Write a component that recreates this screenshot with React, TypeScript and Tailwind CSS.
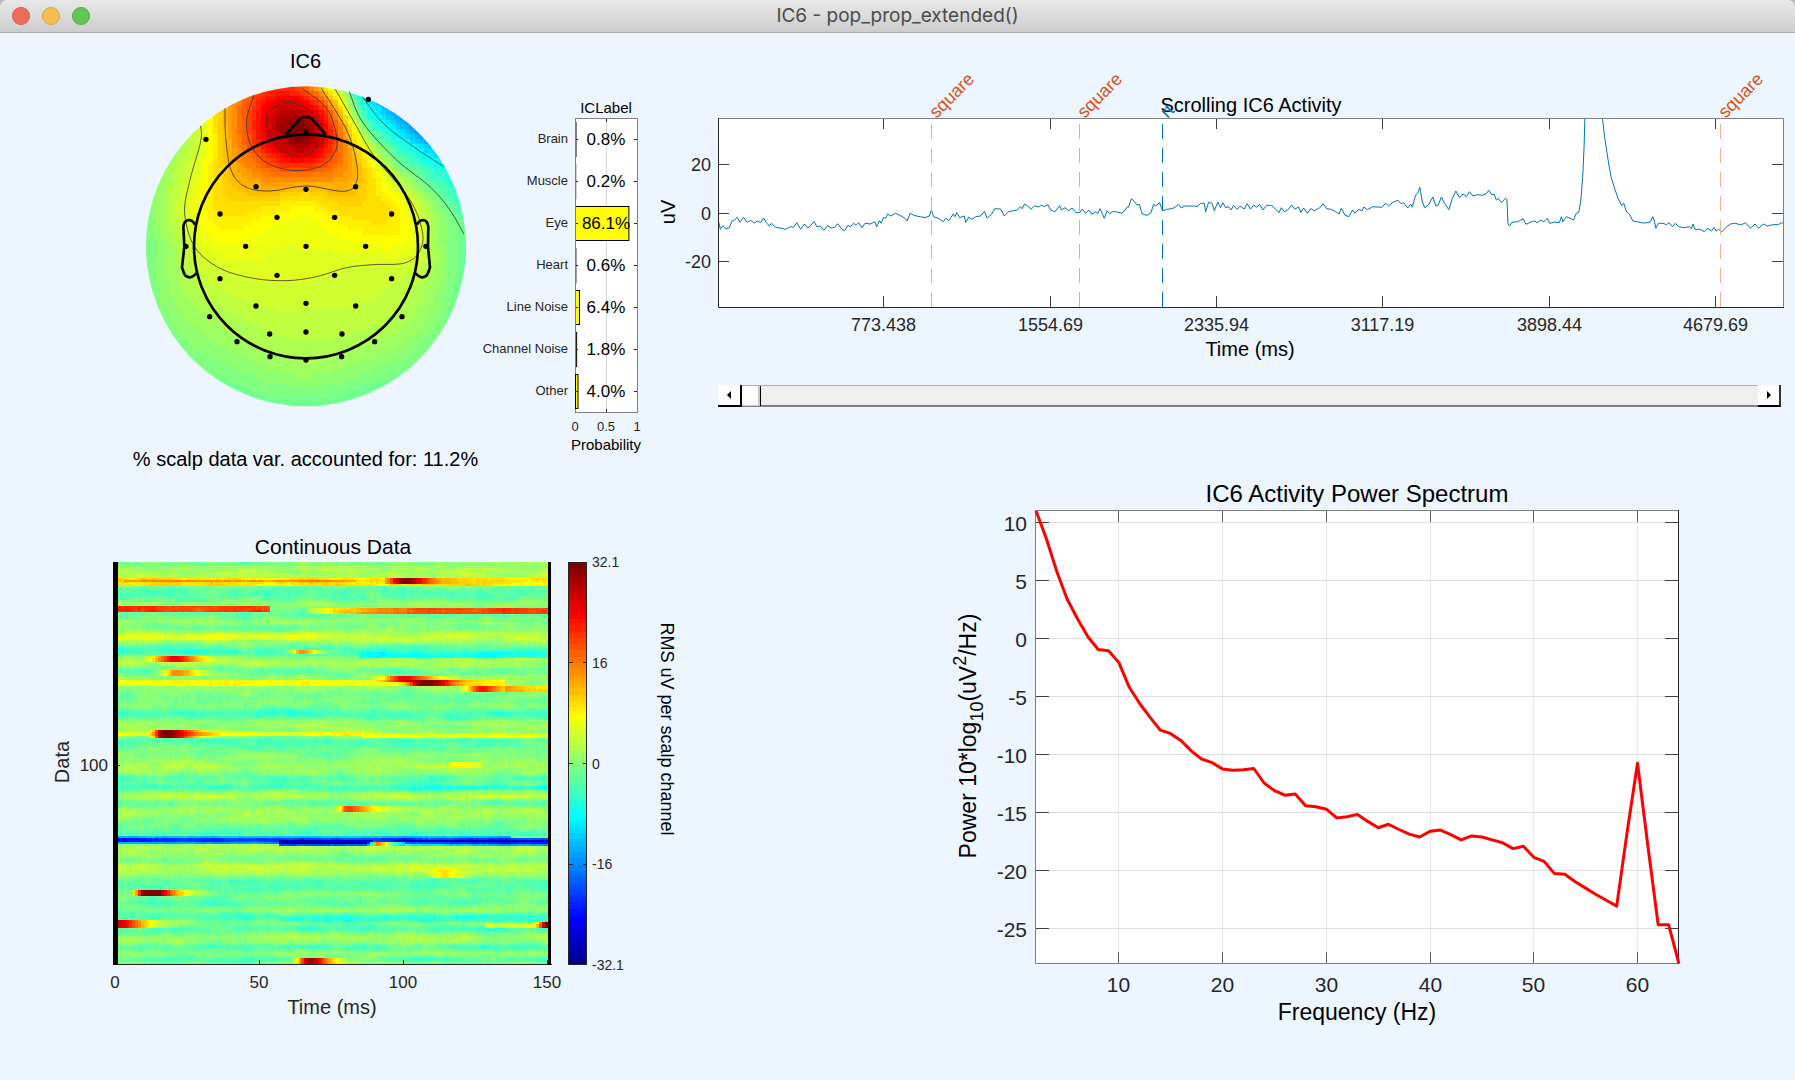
import { useMemo, useState } from 'react';

type Point = [number, number];

const AXIS = '#262626';

/* ---------- colour map ---------- */

const LEVELS = 64;

const clamp = (v: number, lo: number, hi: number) => Math.min(hi, Math.max(lo, v));

// value in -1..1 -> index in the 64 step jet map
const levelOf = (v: number) => clamp(Math.floor(((v + 1) / 2) * LEVELS), 0, LEVELS - 1);

const jet = (level: number) => {
  const t = (level + 1) / LEVELS;
  const ramp = (c: number) => Math.round(255 * clamp(1.5 - Math.abs(4 * t - c), 0, 1));
  return `rgb(${ramp(3)},${ramp(2)},${ramp(1)})`;
};

interface Layer {
  color: string;
  d: string;
}

// merges equal neighbours in each row and collects one path per colour
function rasterize(
  cols: number,
  rows: number,
  x0: number,
  y0: number,
  w: number,
  h: number,
  value: (x: number, y: number, col: number, row: number) => number,
): Layer[] {
  const paths: string[] = Array(LEVELS).fill('');
  for (let r = 0; r < rows; r++) {
    let start = 0;
    let current = -1;
    for (let c = 0; c <= cols; c++) {
      const level = c < cols ? levelOf(value(x0 + (c + 0.5) * w, y0 + (r + 0.5) * h, c, r)) : -1;
      if (level === current) continue;
      if (current >= 0) {
        const len = ((c - start) * w).toFixed(2);
        paths[current] += `M${(x0 + start * w).toFixed(2)} ${(y0 + r * h).toFixed(2)}h${len}v${h}h-${len}z`;
      }
      current = level;
      start = c;
    }
  }
  return paths.map((d, i) => ({ color: jet(i), d })).filter((l) => l.d);
}

function Raster({ layers }: { layers: Layer[] }) {
  return (
    <g shapeRendering="crispEdges">
      {layers.map((l) => (
        <path key={l.color} d={l.d} fill={l.color} />
      ))}
    </g>
  );
}

/* ---------- scalp map ---------- */

const contours: { level: number; closed?: boolean; points: Point[] }[] = [
  {
    level: 0.79,
    closed: true,
    points: [[410, 165], [425, 120], [478, 97], [535, 120], [575, 170], [575, 215], [545, 248], [500, 257], [445, 235]],
  },
  {
    level: 0.58,
    points: [[372, 76], [350, 150], [360, 220], [405, 275], [485, 301], [570, 290], [613, 250], [620, 200], [590, 115], [515, 55]],
  },
  {
    level: 0.37,
    points: [[285, 115], [287, 200], [303, 300], [345, 350], [420, 363], [528, 348], [640, 364], [678, 340], [680, 280], [650, 180], [574, 55]],
  },
  {
    level: 0.16,
    points: [
      [212, 168], [212, 215], [180, 330], [164, 430], [195, 532], [270, 595], [370, 625], [470, 632], [560, 620],
      [650, 593], [730, 584], [820, 580], [865, 550], [878, 490], [840, 390], [735, 262], [680, 170], [616, 58],
    ],
  },
  { level: -0.05, points: [[658, 65], [700, 160], [800, 270], [900, 350], [960, 420], [1002, 493]] },
  { level: -0.26, points: [[697, 80], [760, 160], [850, 230], [942, 290]] },
];

const fieldSamples: [number, number, number][] = [
  [490, 172, 0.96], [528, 188, 0.98], [440, 50, 0.62], [800, 140, -0.42], [870, 200, -0.43], [740, 105, -0.34],
  [60, 450, 0], [100, 610, 0.02], [50, 528, -0.03], [528, 1005, -0.05], [200, 870, -0.02], [860, 870, -0.03],
  [1000, 560, -0.06], [950, 700, -0.01], [528, 528, 0.19], [528, 440, 0.22], [400, 430, 0.26], [270, 400, 0.3],
  [780, 420, 0.28], [528, 700, 0.13], [528, 800, 0.1], [300, 700, 0.11], [750, 700, 0.12], [240, 290, 0.25],
  [250, 125, 0.26], [130, 300, 0.08], [850, 640, 0.1], [130, 540, 0.06], [930, 500, 0.03], [528, 900, 0.05],
  [740, 320, 0.26], [720, 355, 0.3], [310, 370, 0.33], [80, 350, 0.02], [330, 960, -0.04], [720, 960, -0.05],
];

const sensors: Point[] = [
  [715, 88], [228, 208], [528, 188], [378, 350], [528, 358], [677, 350], [270, 432], [441, 442], [614, 442],
  [785, 432], [168, 529], [347, 529], [528, 529], [707, 529], [888, 529], [270, 626], [441, 616], [614, 616],
  [785, 626], [378, 708], [528, 700], [677, 708], [239, 740], [816, 740], [321, 815], [419, 792], [528, 786],
  [636, 792], [734, 815], [420, 860], [635, 860], [528, 870],
];

const green = (ax: number, ay: number, bx: number, by: number) => {
  const r2 = ((ax - bx) ** 2 + (ay - by) ** 2) / 90000;
  return r2 < 1e-9 ? 0 : r2 * (Math.log(r2) / 2 - 1);
};

// biharmonic spline through the scattered samples
function splineField(samples: [number, number, number][]) {
  const n = samples.length;
  const m = samples.map(([x, y, v]) => [...samples.map(([sx, sy]) => green(x, y, sx, sy)), v]);
  for (let i = 0; i < n; i++) {
    let p = i;
    for (let r = i + 1; r < n; r++) if (Math.abs(m[r][i]) > Math.abs(m[p][i])) p = r;
    [m[i], m[p]] = [m[p], m[i]];
    for (let r = i + 1; r < n; r++) {
      const f = m[r][i] / m[i][i];
      for (let c = i; c <= n; c++) m[r][c] -= f * m[i][c];
    }
  }
  const w = Array(n).fill(0);
  for (let i = n - 1; i >= 0; i--) {
    let s = m[i][n];
    for (let c = i + 1; c < n; c++) s -= m[i][c] * w[c];
    w[i] = s / m[i][i];
  }
  return (x: number, y: number) => samples.reduce((s, [sx, sy], i) => s + w[i] * green(x, y, sx, sy), 0);
}

function smoothPath(pts: Point[], closed = false) {
  const n = pts.length;
  const at = (i: number) => (closed ? pts[(i + n) % n] : pts[clamp(i, 0, n - 1)]);
  let d = `M${pts[0][0]} ${pts[0][1]}`;
  for (let i = 0; i < (closed ? n : n - 1); i++) {
    const [a, b, c, e] = [at(i - 1), at(i), at(i + 1), at(i + 2)];
    d += `C${b[0] + (c[0] - a[0]) / 6} ${b[1] + (c[1] - a[1]) / 6} ${c[0] - (e[0] - b[0]) / 6} ${c[1] - (e[1] - b[1]) / 6} ${c[0]} ${c[1]}`;
  }
  return d;
}

function ScalpMap() {
  const layers = useMemo(() => {
    const onContours = contours.flatMap((c) =>
      c.points.map(([x, y]): [number, number, number] => [x, y, c.level]),
    );
    const field = splineField([...onContours, ...fieldSamples]);
    return rasterize(67, 67, 48, 48, 14.4, 14.4, field);
  }, []);

  return (
    <svg viewBox="0 0 347 340" className="block w-full" role="img" aria-label="Scalp map of IC6">
      <defs>
        <clipPath id="scalp">
          <circle cx="528" cy="529" r="480" />
        </clipPath>
      </defs>
      <g transform="translate(-2 -5) scale(0.3333)">
        <g clipPath="url(#scalp)">
          <Raster layers={layers} />
        </g>
        <g fill="none" stroke="#333" strokeWidth="2.4">
          {contours.map((c) => (
            <path key={c.level} d={smoothPath(c.points, c.closed)} />
          ))}
        </g>
        <g fill="none" stroke="#000" strokeWidth="8" strokeLinejoin="round">
          <circle cx="528" cy="529" r="336" />
          <path d="M468 194L511 146Q518 141 528 141Q538 141 545 146L588 194" />
          <path d="M195 464Q188 450 176 450Q162 452 160 470L163 530L156 592Q160 608 167 618Q180 626 190 618L200 610" />
          <path d="M861 464Q868 450 880 450Q893 452 895 470L894 530L900 592Q896 608 889 618Q876 626 866 618L856 610" />
        </g>
        {sensors.map(([x, y]) => (
          <circle key={`${x}-${y}`} cx={x} cy={y} r="8" />
        ))}
      </g>
    </svg>
  );
}

/* ---------- ICLabel ---------- */

const classes = [
  { name: 'Brain', p: 0.8 },
  { name: 'Muscle', p: 0.2 },
  { name: 'Eye', p: 86.1 },
  { name: 'Heart', p: 0.6 },
  { name: 'Line Noise', p: 6.4 },
  { name: 'Channel Noise', p: 1.8 },
  { name: 'Other', p: 4.0 },
];

function ClassBars() {
  return (
    <svg viewBox="0 0 215 340" className="block w-full" role="img" aria-label="ICLabel probabilities">
      <rect x="96" y="1" width="62" height="293" fill="#fff" />
      <path d="M127.5 1V294" stroke="#d9d9d9" />
      {classes.map((c, i) => {
        const y = 21 + i * 42;
        return (
          <g key={c.name}>
            <path d="M96.5 0.5V294" stroke="#808080" />
            <rect
              x="96.5"
              y={y - 16.5}
              width={Math.max(0.2, c.p * 0.62)}
              height="34"
              fill="#ff0"
              stroke="#000"
            />
            <path d={`M96 ${y + 0.5}h3M158 ${y + 0.5}h-3`} stroke={AXIS} />
            <text x="89" y={y + 4} textAnchor="end" fontSize="13" fill={AXIS}>
              {c.name}
            </text>
            <text x="127" y={y + 6} textAnchor="middle" fontSize="17">
              {c.p.toFixed(1)}%
            </text>
          </g>
        );
      })}
      <path d="M96 0.5H158.5V294.5H96" fill="none" stroke="#808080" />
      <path d="M127.5 1v3M127.5 294v-3" stroke={AXIS} />
      <g fontSize="13" fill={AXIS} textAnchor="middle">
        <text x="96" y="313">0</text>
        <text x="127" y="313">0.5</text>
        <text x="158" y="313">1</text>
      </g>
      <text x="127" y="332" textAnchor="middle" fontSize="15">
        Probability
      </text>
    </svg>
  );
}

/* ---------- scrolling activity ---------- */

// prettier-ignore
const traceA = [
  80,485, 85,508, 92,497, 100,507, 110,503, 118,482, 125,480, 132,472, 140,487, 150,472, 160,487, 170,481, 180,489,
  190,483, 198,488, 206,474, 214,488, 222,498, 228,490, 240,502, 255,505, 268,508, 280,500, 290,502, 299,488, 310,508,
  320,492, 330,504, 348,485, 355,500, 365,498, 375,511, 385,497, 395,504, 405,502, 414,491, 425,508, 433,512, 442,496,
  448,500, 458,490, 465,496, 472,488, 482,503, 490,490, 505,492, 517,485, 523,500, 530,482, 535,490, 542,472, 548,475,
  553,462, 562,468, 575,460, 590,467, 602,475, 608,483, 616,460, 630,467, 645,470, 658,473, 670,468, 676,450, 682,470,
  695,475, 709,485, 716,475, 725,482, 737,462, 742,470, 747,458, 755,473, 768,468, 772,487, 780,472, 790,478, 800,470,
  813,468, 824,454, 832,474, 845,462, 853,446, 870,447, 880,468, 892,455, 905,452, 917,450, 925,440, 930,446, 937,432,
  948,440, 955,448, 965,437, 975,441, 985,436, 993,440, 1002,434, 1010,450, 1022,455, 1035,437, 1040,450, 1050,443,
  1060,452, 1070,444, 1080,457, 1092,458, 1098,447, 1108,460, 1117,450, 1125,463, 1135,455, 1142,460, 1148,446,
  1155,462, 1160,475, 1168,452, 1175,461, 1185,454, 1195,456, 1210,460, 1218,450, 1225,440, 1228,442, 1236,416,
  1245,425, 1252,435, 1258,433, 1266,462, 1280,466, 1290,460, 1298,433, 1304,438, 1315,428, 1323,452, 1335,448,
  1350,446, 1360,440, 1368,433, 1375,444, 1385,438, 1395,438, 1410,438, 1420,440, 1430,430, 1440,430, 1444,455,
  1452,427, 1462,430, 1468,452, 1478,426, 1485,443, 1492,428, 1500,443, 1508,440, 1515,450, 1522,436, 1532,448,
  1538,440,
];

// prettier-ignore
const traceB = [
  0,438, 12,447, 20,431, 30,447, 38,436, 48,442, 55,433, 65,450, 75,436, 88,436, 100,447, 110,458, 117,443, 125,455,
  135,450, 146,435, 155,448, 165,441, 172,457, 180,444, 190,460, 200,446, 210,452, 225,444, 235,431, 245,446, 258,448,
  270,455, 280,462, 286,445, 296,465, 308,470, 318,450, 325,460, 335,448, 345,452, 350,441, 360,449, 375,440, 400,442,
  412,430, 420,438, 432,427, 446,421, 455,431, 462,428, 474,444, 482,432, 487,441, 496,405, 502,400, 508,382, 515,425,
  522,443, 532,435, 545,411, 553,438, 560,435, 569,411, 578,430, 590,449, 600,415, 610,393, 620,413, 630,402, 640,410,
  648,395, 658,408, 670,404, 685,406, 695,402, 703,391, 712,405, 718,402, 724,420, 730,415, 739,428, 750,415, 754,418,
  757,492, 761,498, 768,487, 785,485, 800,476, 808,493, 820,487, 832,483, 840,488, 850,480, 858,486, 868,475, 875,490,
  890,486, 902,488, 908,470, 912,485, 922,470, 932,475, 942,480, 950,460, 957,457, 963,420, 968,350, 972,260, 974,176,
];

// prettier-ignore
const traceC = [
  1024,176, 1030,230, 1040,300, 1048,350, 1060,390, 1068,415, 1078,437, 1084,430, 1092,455, 1100,462, 1110,483,
  1125,486, 1140,489, 1152,488, 1160,485, 1166,470, 1170,480, 1175,505, 1182,490, 1195,490, 1205,494, 1212,488,
  1222,500, 1230,490, 1240,500, 1255,503, 1270,500, 1275,506, 1280,492, 1285,508, 1300,508, 1312,515, 1322,505,
  1332,513, 1340,502, 1345,513, 1352,508, 1362,515, 1372,503, 1385,492, 1400,490, 1415,495, 1428,488, 1442,505,
  1455,492, 1465,505, 1478,492, 1490,498, 1505,494, 1520,494, 1530,488, 1534,490,
];

const toPoints = (flat: number[], offset: number, scale: number) => {
  const out: string[] = [];
  for (let i = 0; i < flat.length; i += 2) {
    out.push(`${(offset + flat[i] / scale).toFixed(1)},${(flat[i + 1] / 3 - 58).toFixed(1)}`);
  }
  return out.join(' ');
};

const activityPoints = `${toPoints(traceA, -4, 2.8)} ${toPoints(traceB, 546, 2.825)}`;
const activityTail = toPoints(traceC, 546, 2.825);

const timeTicks = [
  { x: 189.5, label: '773.438' },
  { x: 356.5, label: '1554.69' },
  { x: 522.5, label: '2335.94' },
  { x: 688.5, label: '3117.19' },
  { x: 855.5, label: '3898.44' },
  { x: 1021.5, label: '4679.69' },
];

const voltTicks = [
  { y: 46.5, label: '20' },
  { y: 95.5, label: '0' },
  { y: 143.5, label: '-20' },
];

const events = [
  { x: 237.5, label: 'square', text: '#d95319', line: '#eda58c' },
  { x: 385.5, label: 'square', text: '#d95319', line: '#eda58c' },
  { x: 468.5, label: 'rt', text: '#0072bd', line: '#0072bd' },
  { x: 1026.5, label: 'square', text: '#d95319', line: '#f4ae90' },
];

function ActivityPlot() {
  return (
    <svg viewBox="0 0 1101 255" className="block w-full overflow-visible" role="img" aria-label="IC6 activity over time">
      <rect x="24" y="1" width="1065" height="188" fill="#fff" />
      {timeTicks.map((t) => (
        <g key={t.label}>
          <path d={`M${t.x} 1v10M${t.x} 189v-11`} stroke="#404040" />
          <text x={t.x} y="213" textAnchor="middle" fontSize="18" fill={AXIS}>
            {t.label}
          </text>
        </g>
      ))}
      {voltTicks.map((t) => (
        <g key={t.label}>
          <path d={`M24 ${t.y}h11M1089 ${t.y}h-11`} stroke="#404040" />
          <text x="17" y={t.y + 6} textAnchor="end" fontSize="18" fill={AXIS}>
            {t.label}
          </text>
        </g>
      ))}
      <g fill="none" stroke="#0072bd" strokeWidth="1">
        <polyline points={activityPoints} />
        <polyline points={activityTail} />
      </g>
      {events.map((e) => (
        <g key={e.x}>
          <path d={`M${e.x} 189V1`} stroke={e.line} strokeDasharray="15 9" />
          <text transform={`translate(${e.x + 5} 1) rotate(-45)`} fontSize="18" fill={e.text}>
            {e.label}
          </text>
        </g>
      ))}
      <path d="M24 0.5H1089.5V189" fill="none" stroke="#808080" />
      <path d="M24.5 0V189.5H1090" fill="none" stroke={AXIS} />
      <text x="556" y="238" textAnchor="middle" fontSize="20">
        Time (ms)
      </text>
      <text transform="translate(-19 94) rotate(-90)" textAnchor="middle" fontSize="20">
        uV
      </text>
    </svg>
  );
}

const arrowCls =
  'flex h-[22px] shrink-0 items-center justify-center border-r-2 border-b-2 border-b-black bg-white';

function TimeScroller() {
  const [pos, setPos] = useState(0);
  return (
    <div className="mt-3 mr-[14px] ml-6 flex h-[22px]">
      <button
        type="button"
        aria-label="Scroll back"
        onClick={() => setPos(Math.max(0, pos - 1))}
        className={arrowCls + ' w-6 border-r-black'}
      >
        <svg viewBox="0 0 4 8" className="h-2 w-1">
          <path d="M0 4L4 0V8Z" />
        </svg>
      </button>
      <input
        type="range"
        aria-label="Time window"
        min={0}
        max={100}
        value={pos}
        onChange={(e) => setPos(Number(e.target.value))}
        className="h-[22px] min-w-0 flex-1 appearance-none border-t border-b-2 border-t-[#b0b0b0] border-b-[#808080] bg-[#efefef] [&::-webkit-slider-thumb]:h-[20px] [&::-webkit-slider-thumb]:w-[19px] [&::-webkit-slider-thumb]:appearance-none [&::-webkit-slider-thumb]:border-r [&::-webkit-slider-thumb]:border-r-black [&::-webkit-slider-thumb]:bg-white [&::-webkit-slider-thumb]:shadow-[inset_-2px_-1px_0_#c8c8c8]"
      />
      <button
        type="button"
        aria-label="Scroll forward"
        onClick={() => setPos(Math.min(100, pos + 1))}
        className={arrowCls + ' w-[23px] border-r-[#333]'}
      >
        <svg viewBox="0 0 4 8" className="h-2 w-1">
          <path d="M4 4L0 0V8Z" />
        </svg>
      </button>
    </div>
  );
}

/* ---------- continuous data image ---------- */

// background level at given heights, interpolated in between
const baseline: Point[] = [
  [126, 0], [150, 0.1], [170, 0.12], [196, 0], [215, -0.1], [240, -0.05], [250, 0.06], [285, -0.08], [305, 0.03],
  [325, -0.04], [345, 0.16], [360, 0.14], [380, -0.05], [398, -0.16], [410, 0], [430, 0.12], [445, 0], [455, -0.06],
  [475, 0.02], [500, 0.06], [520, 0], [540, -0.03], [560, 0.02], [578, -0.14], [592, -0.12], [605, 0.03], [625, 0.04],
  [645, 0.08], [662, -0.1], [700, -0.01], [738, 0.08], [760, 0.04], [775, -0.1], [790, -0.05], [803, -0.16],
  [815, 0], [830, 0.14], [850, -0.06], [870, 0.06], [900, 0.04], [925, -0.06], [944, -0.1], [985, 0.12],
  [1010, 0.02], [1020, -0.04], [1040, 0.16], [1060, 0.1], [1080, -0.08], [1105, -0.12], [1120, 0], [1150, -0.08],
  [1170, 0.06], [1190, -0.14], [1212, -0.02], [1230, -0.12], [1250, 0.08], [1270, 0.02], [1282, -0.12], [1302, 0.06],
  [1320, -0.1], [1335, 0.03],
];

// y0, y1, x0, x1, value at x0, value at x1
const strips: [number, number, number, number, number, number][] = [
  [174, 195, 234, 1530, 0.3, 0.27],
  [178, 186, 249, 948, 0.45, 0.42],
  [259, 274, 234, 690, 0.62, 0.61],
  [266, 281, 800, 950, 0.1, 0.34],
  [266, 281, 950, 1100, 0.38, 0.54],
  [266, 281, 1100, 1530, 0.57, 0.62],
  [345, 357, 234, 830, 0.18, 0.18],
  [397, 412, 955, 1530, -0.24, -0.2],
  [481, 496, 234, 1395, 0.23, 0.19],
  [498, 514, 1395, 1530, 0.3, 0.26],
  [636, 650, 234, 965, 0.19, 0.24],
  [644, 656, 965, 1530, 0.19, 0.19],
  [728, 742, 1232, 1322, 0.22, 0.16],
  [800, 810, 1080, 1530, -0.14, -0.24],
  [949, 953, 234, 1412, -0.4, -0.4],
  [954, 965, 234, 1530, -0.7, -0.64],
  [967, 971, 234, 714, -0.4, -0.5],
  [961, 971, 714, 1000, -0.94, -0.9],
  [973, 976, 714, 1000, -0.6, -0.6],
  [967, 976, 1000, 1090, -0.15, -0.4],
  [961, 965, 1060, 1530, -0.88, -0.92],
  [967, 971, 1090, 1530, -0.6, -0.75],
  [973, 976, 1090, 1530, -0.3, -0.5],
  [1191, 1207, 724, 1530, -0.18, -0.18],
  [1210, 1225, 1335, 1530, 0.13, 0.13],
];

// y0, y1, start, centre, end, peak
const pulses: [number, number, number, number, number, number][] = [
  [177, 192, 1030, 1095, 1210, 1],
  [388, 403, 735, 785, 880, 0.46],
  [406, 424, 310, 408, 520, 0.76],
  [450, 467, 350, 408, 540, 0.46],
  [468, 486, 1000, 1095, 1250, 0.76],
  [480, 498, 1080, 1160, 1290, 1.05],
  [498, 516, 1260, 1328, 1440, 0.7],
  [633, 651, 330, 375, 510, 1.1],
  [861, 878, 885, 925, 1050, 0.62],
  [966, 975, 985, 1012, 1070, 0.5],
  [1053, 1075, 1150, 1215, 1290, 0.3],
  [1110, 1128, 276, 325, 440, 1.35],
  [1203, 1221, 150, 234, 370, 0.85],
  [1209, 1226, 1485, 1525, 1560, 1.05],
  [1314, 1332, 755, 812, 920, 0.92],
];

const hash = (x: number, y: number) => {
  let h = Math.imul(x | 0, 374761393) ^ Math.imul(y | 0, 668265263);
  h = Math.imul(h ^ (h >>> 13), 1274126177);
  return ((h ^ (h >>> 16)) >>> 0) / 4294967295 - 0.5;
};

const noise = (x: number, y: number) => {
  const [ix, iy] = [Math.floor(x), Math.floor(y)];
  const [dx, dy] = [x - ix, y - iy];
  const top = hash(ix, iy) * (1 - dx) + hash(ix + 1, iy) * dx;
  const bottom = hash(ix, iy + 1) * (1 - dx) + hash(ix + 1, iy + 1) * dx;
  return top * (1 - dy) + bottom * dy;
};

function baselineAt(y: number) {
  const i = clamp(baseline.findIndex((b) => b[0] > y), 1, baseline.length - 1);
  const [a, b] = [baseline[i - 1], baseline[i]];
  return a[1] + ((b[1] - a[1]) * (y - a[0])) / (b[0] - a[0]);
}

function dataValue(x: number, y: number, col: number, row: number) {
  let v = baselineAt(y) * 0.85 - 0.02;
  for (const [y0, y1, x0, x1, v0, v1] of strips) {
    if (y >= y0 && y <= y1 && x > x0 && x < x1) v = v0 + ((v1 - v0) * (x - x0)) / (x1 - x0);
  }
  v += 0.11 * noise(col / 11, row / 3) + 0.08 * noise(col / 4 + 90, row / 1.6) + 0.05 * noise(col + 300, row / 3);
  for (const [y0, y1, start, centre, end, peak] of pulses) {
    if (y < y0 || y > y1 || x < start || x > end + 160) continue;
    const left = x < centre;
    const s = left ? (centre - start) / 1.5 : (end - centre) / 1.5;
    v += (peak - Math.min(v, peak)) * Math.exp(-((Math.abs(x - centre) / s) ** (left ? 2 : 1.5)));
  }
  return v;
}

function DataImage() {
  const layers = useMemo(() => rasterize(150, 201, 234, 126, 8.6, 6, dataValue), []);

  return (
    <svg viewBox="0 0 694 480" className="block w-full overflow-visible" role="img" aria-label="Continuous data image">
      <g transform="translate(40 -41) scale(0.3333)">
        <Raster layers={layers} />
      </g>
      <path d="M116 403.5H552" stroke={AXIS} />
      <path d="M259.5 403v-4M403.5 403v-4M547.5 403v-4M116 204.5h4" stroke={AXIS} />
      <rect x="113" y="1" width="5" height="403" />
      <rect x="548" y="1" width="3" height="403" />
      <g fontSize="17" fill={AXIS} textAnchor="middle">
        <text x="115" y="427">0</text>
        <text x="259" y="427">50</text>
        <text x="403" y="427">100</text>
        <text x="547" y="427">150</text>
      </g>
      <text x="108" y="210" textAnchor="end" fontSize="17" fill={AXIS}>
        100
      </text>
      <text x="332" y="453" textAnchor="middle" fontSize="20" fill={AXIS}>
        Time (ms)
      </text>
      <text transform="translate(69 201) rotate(-90)" textAnchor="middle" fontSize="20" fill={AXIS}>
        Data
      </text>

      {/* colour bar */}
      <g shapeRendering="crispEdges">
        {Array.from({ length: LEVELS }, (_, i) => (
          <rect key={i} x="569" y={1 + (63 - i) * 6.3} width="18" height="6.5" fill={jet(i)} />
        ))}
      </g>
      <rect x="568.5" y="1.5" width="18" height="402" fill="none" stroke={AXIS} />
      <path
        d="M569 101.5h4M587 101.5h-4M569 202.5h4M587 202.5h-4M569 303.5h4M587 303.5h-4"
        stroke={AXIS}
      />
      <g fontSize="14" fill={AXIS}>
        <text x="592" y="6">32.1</text>
        <text x="592" y="107">16</text>
        <text x="592" y="208">0</text>
        <text x="592" y="308">-16</text>
        <text x="592" y="409">-32.1</text>
      </g>
      <text transform="translate(661 168) rotate(90)" textAnchor="middle" fontSize="18">
        RMS uV per scalp channel
      </text>
    </svg>
  );
}

/* ---------- power spectrum ---------- */

// dB for every 1 Hz bin, first bin at 2 Hz
const power = [
  11, 8.6, 5.8, 3.4, 1.7, 0.15, -0.95, -1.05, -2.1, -4.2, -5.6, -6.8, -7.9, -8.2, -8.8, -9.7, -10.4, -10.7, -11.25,
  -11.35, -11.3, -11.2, -12.45, -13.1, -13.5, -13.4, -14.4, -14.5, -14.7, -15.45, -15.35, -15.15, -15.75, -16.3, -16,
  -16.45, -16.85, -17.1, -16.6, -16.5, -16.9, -17.35, -17, -17.1, -17.35, -17.6, -18.1, -17.9, -18.85, -19.2, -20.25,
  -20.3, -20.95, -21.5, -22.05, -22.55, -23.05, -16.7, -10.75, -17.8, -24.65, -24.65, -28,
];

const fx = (hz: number) => 342 + (hz - 2) * 10.37;
const fy = (db: number) => 14.4 + (10 - db) * 11.61;
const snap = (v: number) => Math.floor(v) + 0.5;

function SpectrumPlot() {
  const line = power.map((db, i) => `${fx(i + 2).toFixed(1)},${fy(db).toFixed(1)}`).join(' ');

  return (
    <svg viewBox="0 0 1101 530" className="block w-full" role="img" aria-label="IC6 power spectrum">
      <rect x="342" y="2" width="643" height="454" fill="#fff" />
      {[10, 20, 30, 40, 50, 60].map((hz) => {
        const x = snap(fx(hz));
        return (
          <g key={hz}>
            <path d={`M${x} 3V456`} stroke="#ebebeb" />
            <path d={`M${x} 3v12M${x} 456v-12`} stroke="#606060" />
            <text x={x} y="484" textAnchor="middle" fontSize="21" fill={AXIS}>
              {hz}
            </text>
          </g>
        );
      })}
      {[10, 5, 0, -5, -10, -15, -20, -25].map((db) => {
        const y = snap(fy(db));
        return (
          <g key={db}>
            <path d={`M342 ${y}H984`} stroke="#e0e0e0" />
            <path d={`M342 ${y}h13M984 ${y}h-13`} stroke="#404040" />
            <text x="333" y={y + 8} textAnchor="end" fontSize="21" fill={AXIS}>
              {db}
            </text>
          </g>
        );
      })}
      <path d="M984.5 2.5H341.5V455.5H984.5" fill="none" stroke="#808080" />
      <path d="M984.5 2V456" stroke={AXIS} />
      <polyline points={line} fill="none" stroke="#f00" strokeWidth="3" strokeLinejoin="round" />
      <text x="663" y="512" textAnchor="middle" fontSize="23">
        Frequency (Hz)
      </text>
      <text transform="translate(282 228) rotate(-90)" textAnchor="middle" fontSize="23">
        Power 10*log
        <tspan dy="7" fontSize="18">10</tspan>
        <tspan dy="-7">(uV</tspan>
        <tspan dy="-10" fontSize="18">2</tspan>
        <tspan dy="10">/Hz)</tspan>
      </text>
    </svg>
  );
}

/* ---------- window ---------- */

function TitleBar() {
  return (
    <header className="relative flex h-[33px] items-center justify-center rounded-t-lg border-b border-[#a9adab] bg-linear-to-b from-[#e8e8e8] to-[#cdcdcd]">
      <div className="absolute left-3 flex gap-3">
        <button type="button" aria-label="Close" className="size-[18px] rounded-full border border-[#d9584f] bg-[#ee6a5f]" />
        <button type="button" aria-label="Minimize" className="size-[18px] rounded-full border border-[#dba443] bg-[#f5bf50]" />
        <button type="button" aria-label="Zoom" className="size-[18px] rounded-full border border-[#4faa3f] bg-[#62c655]" />
      </div>
      <h1 className="font-['Inter',sans-serif] text-[19px] leading-[32px] text-[#4b4b4b]">
        IC6 - pop_prop_extended()
      </h1>
    </header>
  );
}

export default function App() {
  return (
    <div className="bg-[#b8bcbc]">
      <div className="flex min-h-screen flex-col rounded-t-lg bg-[#edf5ff] font-['Liberation_Sans',Arial,sans-serif] text-black">
        <TitleBar />
        <main>
          <div className="grid grid-cols-[479fr_215fr_1101fr]">
            <section className="flex min-w-0 flex-col items-center pt-[14px] pl-[132px]">
              <h2 className="text-[20px] leading-[28px]">IC6</h2>
              <ScalpMap />
              <p className="mt-[30px] text-[20px] leading-[28px] whitespace-nowrap">
                % scalp data var. accounted for: 11.2%
              </p>
            </section>
            <section className="min-w-0 pt-[65px]">
              <h2 className="pl-[39px] text-center text-[15px] leading-[20px]">ICLabel</h2>
              <ClassBars />
            </section>
            <section className="min-w-0 pt-[59px]">
              <h2 className="pl-[13px] text-center text-[20px] leading-[26px]">Scrolling IC6 Activity</h2>
              <ActivityPlot />
              <TimeScroller />
            </section>
          </div>
          <div className="grid grid-cols-[694fr_1101fr]">
            <section className="min-w-0 pt-[60px]">
              <h2 className="pr-[28px] text-center text-[21px] leading-[28px]">Continuous Data</h2>
              <DataImage />
            </section>
            <section className="min-w-0 pt-[7px]">
              <h2 className="pl-[225px] text-center text-[24px] leading-[28px]">IC6 Activity Power Spectrum</h2>
              <SpectrumPlot />
            </section>
          </div>
        </main>
      </div>
    </div>
  );
}
